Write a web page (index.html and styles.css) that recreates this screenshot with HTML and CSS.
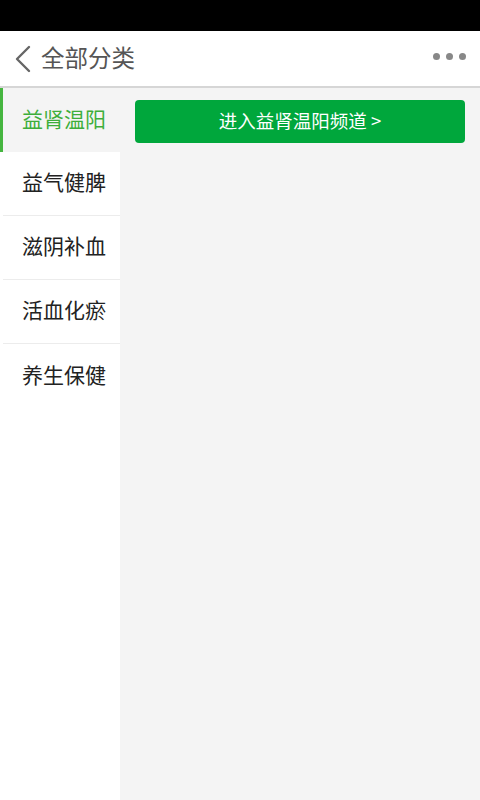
FILE: index.html
```html
<!DOCTYPE html>
<html lang="zh">
<head>
<meta charset="utf-8">
<link rel="stylesheet" href="styles.css">
</head>
<body>
<div class="status"></div>
<header class="topbar">
  <div class="back">
    <svg width="18" height="28" viewBox="0 0 18 28"><path d="M15 2 L3 14 L15 26" fill="none" stroke="#666" stroke-width="2.4" stroke-linecap="round" stroke-linejoin="round"/></svg>
  </div>
  <div class="title">全部分类</div>
  <div class="more"><span></span><span></span><span></span></div>
</header>
<main class="body">
  <nav class="side">
    <div class="item active">益肾温阳</div>
    <div class="item">益气健脾</div>
    <div class="item">滋阴补血</div>
    <div class="item">活血化瘀</div>
    <div class="item">养生保健</div>
  </nav>
  <section class="content">
    <div class="btn">进入益肾温阳频道 &gt;</div>
  </section>
</main>
</body>
</html>
```
FILE: styles.css
```css
html, body { margin: 0; padding: 0; }
body {
  width: 480px; height: 800px; overflow: hidden;
  font-family: "Noto Sans CJK SC", "Noto Sans", sans-serif;
  background: #f4f4f4;
  display: flex; flex-direction: column;
}
.status { height: 31px; background: #000; flex: none; }
.topbar {
  height: 55px; flex: none; background: #fff;
  border-bottom: 2px solid #d6d6d6;
  display: flex; align-items: center;
  padding: 0 12px 0 14px;
}
.back { width: 18px; height: 28px; display: flex; margin-right: 9px; }
.title { font-size: 23.5px; color: #555; flex: 1; line-height: 1; padding-bottom: 1px; }
.more { display: flex; gap: 6px; margin-right: 2px; margin-bottom: 4px; }
.more span { width: 7px; height: 7px; border-radius: 50%; background: #888; }
.body { flex: 1; display: flex; }
.side { width: 120px; background: #fff; flex: none; }
.item {
  height: 63px; display: flex; align-items: center;
  font-size: 21px; line-height: 1; color: #222;
  border-bottom: 1px solid #ececec;
  margin-left: 3px; padding-left: 19px; padding-bottom: 4px; box-sizing: border-box;
  height: 64px;
}
.item.active {
  background: #f4f4f4; color: #3dae3a;
  border-left: 3px solid #45b53f; margin-left: 0; padding-left: 19px;
  border-bottom: none; height: 64px;
}
.item:last-child { border-bottom: none; }
.content { flex: 1; padding: 12px 15px 0 15px; }
.btn {
  height: 43px; background: #00a73c; border-radius: 4px;
  color: #fff; font-size: 18.5px; line-height: 1; padding-bottom: 2px; box-sizing: border-box;
  display: flex; align-items: center; justify-content: center;
}
```
